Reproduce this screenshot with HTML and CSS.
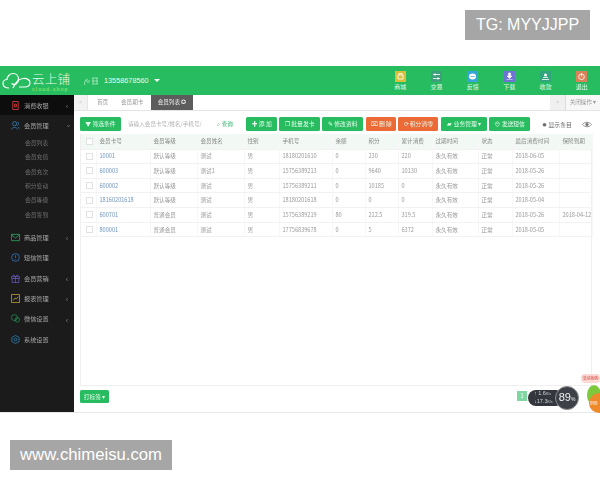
FILE: index.html
```html
<!DOCTYPE html>
<html lang="zh">
<head>
<meta charset="utf-8">
<title>云上铺</title>
<link rel="stylesheet" href="styles.css">
</head>
<body>
<div class="wm wm-top">TG: MYYJJPP</div>
<div class="app">
  <header class="head">
    <div class="logo">
      <svg class="cloud" width="30" height="18" viewBox="0 0 30 18" fill="none" stroke="#fff" stroke-width="1.200"><path d="M7 16C3 16 1 14 1 11.500C1 9 3 7.500 5 7.500C5.500 3.500 8.500 1.500 11 1.500C14.500 1.500 16.500 4 16.500 7C16.500 11 13 14 9.500 11.500"/><path d="M11 16C13 11 17 7 21 6.500C25 6 28 8 28 10.500C28 13 26 15 22.500 15L17 15"/></svg>
      <div class="logo-text"><span class="logo-cn">云上铺</span><span class="logo-en">cloud.shop</span></div>
    </div>
    <svg class="sig" width="18" height="12" viewBox="0 0 18 12" fill="none" stroke="#c4f0d3" stroke-width=".7"><path d="M3 10C1 7 6 2 5 5C4 8 8 9 7 5M10 3h6M10 6h6M10 9h6M11 3v6M15 3v6"/></svg>
    <span class="phone">13558678560</span><span class="caret"></span>
    <nav class="tools">
      <div class="tool"><svg class="ti ti-a" viewBox="0 0 11 11"><path d="M3 4h5v4H3zM4 4V2.500h3V4" fill="none" stroke="#fff" stroke-width=".8"/></svg><span>商城</span></div>
      <div class="tool"><svg class="ti ti-b" viewBox="0 0 11 11"><path d="M2 3.500h7M2 7.500h7" stroke="#fff" stroke-width=".8"/><circle cx="4" cy="3.500" r="1" fill="#fff"/><circle cx="7" cy="7.500" r="1" fill="#fff"/></svg><span>交易</span></div>
      <div class="tool"><svg class="ti ti-c" viewBox="0 0 11 11"><ellipse cx="5.500" cy="5.500" rx="3.500" ry="3" fill="#fff"/><path d="M3.500 5.500h4" stroke="#36a6d8" stroke-width=".7"/></svg><span>反馈</span></div>
      <div class="tool"><svg class="ti ti-d" viewBox="0 0 11 11"><path d="M4.500 2h2v3H8L5.500 7.500 3 5h1.500zM2.500 8.500h6" fill="#fff" stroke="#fff" stroke-width=".5"/></svg><span>下载</span></div>
      <div class="tool"><svg class="ti ti-e" viewBox="0 0 11 11"><circle cx="5.500" cy="4" r="1.500" fill="#fff"/><path d="M2 8.500h7M3 6.500h5" stroke="#fff" stroke-width=".8"/></svg><span>收款</span></div>
      <div class="tool"><svg class="ti ti-f" viewBox="0 0 11 11"><circle cx="5.500" cy="5.800" r="2.800" fill="none" stroke="#fff" stroke-width=".8"/><path d="M5.500 2v3.500" stroke="#fff" stroke-width=".8"/></svg><span>退出</span></div>
    </nav>
  </header>
  <div class="body">
    <aside class="side">
      <div class="mi mi-on"><svg class="si" viewBox="0 0 10 10" fill="none" stroke="#d33c3c"><path d="M2 .5h6v9H2zM4 3.500h2v3H4z"/></svg><b>消费收银</b><em>‹</em></div>
      <div class="mi"><svg class="si" viewBox="0 0 10 10" fill="none" stroke="#3f8fd0" stroke-width=".8"><circle cx="4" cy="3" r="2.300"/><path d="M.5 9.500C1 6.500 7 6.500 7.500 9.500M7 1c2 .5 2 3 0 4M8 6.500l1.500 2"/></svg><b>会员管理</b><em class="down">‹</em></div>
      <div class="subs">
        <div>会员列表</div><div>会员充值</div><div>会员充次</div><div>积分变动</div><div>会员等级</div><div>会员签到</div>
      </div>
      <div class="mi"><svg class="si" viewBox="0 0 10 10" fill="none" stroke="#2fb56a" stroke-width=".8"><path d="M.5 1.500h9v7h-9zM.5 2l4.500 3.500L9.500 2"/></svg><b>商品管理</b><em>‹</em></div>
      <div class="mi"><svg class="si" viewBox="0 0 10 10" fill="none" stroke="#3276c8" stroke-width=".9"><circle cx="5" cy="5" r="4.300"/><path d="M5 2.500v3M5 6.800v.8"/></svg><b>短信管理</b></div>
      <div class="mi"><svg class="si" viewBox="0 0 10 10" fill="none" stroke="#6a5fc8" stroke-width=".8"><path d="M.5 3h9v2h-9zM1.300 5v4.500h7.400V5M5 3v6.500M5 3C3 0 1 1 3 3M5 3c2-3 4-2 2 0"/></svg><b>会员营销</b><em>‹</em></div>
      <div class="mi"><svg class="si" viewBox="0 0 10 10" fill="none" stroke="#c8a03c" stroke-width=".9"><path d="M.5.500h9v9h-9zM2.500 7l2-2.500 1.500 1L8 3"/></svg><b>报表管理</b><em>‹</em></div>
      <div class="mi"><svg class="si" viewBox="0 0 10 10" fill="none" stroke="#1f9a55" stroke-width=".8"><circle cx="3.800" cy="4" r="3.300"/><circle cx="7" cy="6.500" r="2.500"/></svg><b>微信设置</b><em>‹</em></div>
      <div class="mi"><svg class="si" viewBox="0 0 10 10" fill="none" stroke="#2f8fc0" stroke-width=".8"><path d="M5 .5l4 2.250v4.500L5 9.500 1 7.250v-4.500z"/><circle cx="5" cy="5" r="1.500"/></svg><b>系统设置</b></div>
    </aside>
    <main class="main">
      <div class="tabs">
        <span class="tab-nav">«</span>
        <span class="tab tab-home">首页</span>
        <span class="tab tab-card">会员期卡</span>
        <span class="tab tab-on">会员列表 ✪</span>
        <span class="tab-right"><span class="tab-nav2">»</span><span class="tab-close">关闭操作 ▾</span></span>
      </div>
      <div class="work">
        <div class="bar">
          <span class="btn w-filter">▼ 筛选条件</span>
          <span class="search">请输入会员卡号/姓名/手机号/</span>
          <span class="query">⌕ 查询</span>
          <span class="btn w-add">✚ 添 加</span>
          <span class="btn w-batch">❐ 批量发卡</span>
          <span class="btn w-edit">✎ 修改资料</span>
          <span class="btn red w-del">⌧ 删 除</span>
          <span class="btn red w-clear">⟳ 积分清零</span>
          <span class="btn w-biz">▰ 业务管理 ▾</span>
          <span class="btn w-sms">⊖ 发送短信</span>
          <span class="show">✹ 显示条目</span>
          <svg class="eye" width="10" height="7" viewBox="0 0 10 7" fill="none" stroke="#777" stroke-width=".8"><path d="M.5 3.500C3 .5 7 .5 9.500 3.500 7 6.500 3 6.500.5 3.500z"/><circle cx="5" cy="3.500" r="1.300" fill="#777"/></svg>
        </div>
        <div class="grid">
          <table>
            <thead>
              <tr><th class="c1"><i class="cb"></i></th><th class="c2">会员卡号</th><th class="c3">会员等级</th><th class="c4">会员姓名</th><th class="c5">性别</th><th class="c6">手机号</th><th class="c7">余额</th><th class="c8">积分</th><th class="c9">累计消费</th><th class="c10">过期时间</th><th class="c11">状态</th><th class="c12">最后消费时间</th><th class="c13">保险到期</th></tr>
            </thead>
            <tbody>
              <tr><td><i class="cb"></i></td><td class="lk">10001</td><td>默认等级</td><td>测试</td><td>男</td><td>18180201610</td><td>0</td><td>230</td><td>220</td><td>永久有效</td><td>正常</td><td>2018-06-05</td><td></td></tr>
              <tr><td><i class="cb"></i></td><td class="lk">600003</td><td>默认等级</td><td>测试1</td><td>男</td><td>15756389213</td><td>0</td><td>9640</td><td>10130</td><td>永久有效</td><td>正常</td><td>2018-05-26</td><td></td></tr>
              <tr><td><i class="cb"></i></td><td class="lk">600002</td><td>默认等级</td><td>测试</td><td>男</td><td>15756389211</td><td>0</td><td>10185</td><td>0</td><td>永久有效</td><td>正常</td><td>2018-05-26</td><td></td></tr>
              <tr><td><i class="cb"></i></td><td class="lk">18160201618</td><td>默认等级</td><td>测试</td><td>男</td><td>18180201618</td><td>0</td><td>0</td><td>0</td><td>永久有效</td><td>正常</td><td>2018-05-04</td><td></td></tr>
              <tr><td><i class="cb"></i></td><td class="lk">600701</td><td>普通会员</td><td>测试</td><td>男</td><td>15756389219</td><td>80</td><td>212.5</td><td>319.5</td><td>永久有效</td><td>正常</td><td>2018-05-26</td><td>2018-04-12</td></tr>
              <tr><td><i class="cb"></i></td><td class="lk">800001</td><td>普通会员</td><td>测试</td><td>男</td><td>17756839678</td><td>0</td><td>5</td><td>6372</td><td>永久有效</td><td>正常</td><td>2018-05-05</td><td></td></tr>
            </tbody>
          </table>
        </div>
        <div class="foot"><span class="btn w-print">打标签 ▾</span><span class="page">1</span></div>
      </div>
    </main>
  </div>
</div>
<div class="widget">
  <div class="pill"><span>↑ 1.6<small>K/s</small></span><span>↓17.3<small>K/s</small></span></div>
  <div class="ring">89<small>%</small></div>
</div>
<div class="mascot">
  <div class="bubble">活动抢购</div>
  <div class="blob"></div>
  <div class="orange">999</div>
</div>
<div class="wm wm-bot">www.chimeisu.com</div>
</body>
</html>
```

FILE: styles.css
```css
* { box-sizing: border-box; }
html, body { margin: 0; padding: 0; height: 480px; overflow: hidden; background: #fff; }
body { position: relative; padding-top: 66px; font-family: "Noto Sans CJK SC", "Liberation Sans", sans-serif; font-size: 5.600px; color: #888; }
i, em { font-style: normal; }

.wm { position: absolute; background: #a6a6a6; color: #fff; font-family: "Liberation Sans", sans-serif; font-size: 16px; line-height: 30px; text-align: center; z-index: 5; }
.wm-top { left: 465px; top: 10px; width: 125px; }
.wm-bot { left: 10px; top: 440px; width: 162px; font-size: 16.700px; }

.app { height: 347px; display: flex; flex-direction: column; filter: blur(.4px); border-bottom: 1px solid #e8e8e8; }
.head { height: 29px; background: #27bc5f; display: flex; align-items: center; color: #fff; flex: none; }
.logo { display: flex; align-items: center; width: 82px; padding-left: 2px; }
.logo-text { display: flex; flex-direction: column; margin-top: 1px; }
.logo-cn { font-size: 12.500px; line-height: 15px; width: 40px; color: #e6faed; font-weight: 300; letter-spacing: .3px; white-space: nowrap; }
.logo-en { font-size: 5px; line-height: 6px; letter-spacing: 1px; color: #8fdc6a; font-family: "Liberation Sans", sans-serif; font-weight: bold; }
.sig { margin-right: 4px; }
.phone { font-family: "Liberation Sans", sans-serif; font-size: 7.300px; color: #e9fbef; }
.caret { margin-left: 5px; border-left: 3px solid transparent; border-right: 3px solid transparent; border-top: 3px solid #fff; }
.tools { margin-left: auto; display: flex; width: 218px; }
.tool { width: 36.400px; display: flex; flex-direction: column; align-items: center; font-size: 6px; line-height: 8px; gap: 1px; color: #e8fbef; padding-top: 1px; }
.ti { width: 11px; height: 11px; display: block; }
.ti-a { background: #d8c03c; }
.ti-b { background: #3f9f7a; }
.ti-c { background: #36a6d8; }
.ti-d { background: #6f74d4; }
.ti-e { background: #33a57c; }
.ti-f { background: #d9835a; }

.body { flex: 1; display: flex; min-height: 0; }
.side { width: 74px; background: #1b1b1b; flex: none; color: #a8a8a8; }
.mi { height: 20.400px; display: flex; align-items: center; padding-left: 11px; padding-right: 6px; gap: 4px; font-size: 6.200px; }
.mi b { font-weight: normal; flex: 1; }
.mi em { font-size: 7px; color: #999; }
.mi em.down { transform: rotate(-90deg); }
.mi-on { background: #0d0d0d; }
.si { width: 9px; height: 9px; flex: none; }
.subs { padding-bottom: 5px; color: #707070; font-size: 5.800px; }
.subs div { height: 14.400px; line-height: 14.400px; padding-left: 25px; }

.main { flex: 1; display: flex; flex-direction: column; min-width: 0; }
.tabs { height: 16px; display: flex; align-items: stretch; border-bottom: 1px solid #e4e4e4; line-height: 15px; flex: none; color: #999; }
.tab-nav { width: 14px; text-align: center; background: #f2f2f2; color: #bbb; border-right: 1px solid #e6e6e6; }
.tab { display: block; }
.tab-home { margin-left: 9px; width: 24px; }
.tab-card { width: 30px; }
.tab-on { background: #5c5c5c; color: #eee; width: 42px; text-align: center; }
.tab-right { margin-left: auto; display: flex; }
.tab-nav2 { width: 16px; text-align: center; background: #f0f0f0; color: #bbb; border-right: 1px solid #ddd; }
.tab-close { width: 34px; text-align: center; background: #f7f7f7; }

.work { flex: 1; display: flex; flex-direction: column; padding: 6px 8px 0 6px; min-height: 0; }
.bar { height: 14px; display: flex; align-items: center; flex: none; white-space: nowrap; }
.btn { height: 14px; line-height: 14px; background: #27bc5f; color: #e8fbef; border-radius: 1.500px; text-align: center; font-size: 5.800px; display: block; flex: none; }
.btn.red { background: #ec6a35; }
.w-filter { width: 41px; }
.search { width: 90px; margin-left: 7px; color: #b0b0b0; overflow: hidden; font-size: 5.600px; }
.query { width: 29px; color: #2fb56a; }
.w-add { width: 31px; }
.w-batch { width: 41px; margin-left: 2px; }
.w-edit { width: 41px; margin-left: 2px; }
.w-del { width: 30px; margin-left: 3px; }
.w-clear { width: 40px; margin-left: 2px; }
.w-biz { width: 46px; margin-left: 3px; }
.w-sms { width: 41px; margin-left: 2px; }
.show { margin-left: 12px; width: 40px; color: #666; font-size: 5.800px; }
.eye { flex: none; }

.grid { flex: 1; margin-top: 3px; border: 1px solid #f0f0f0; border-top: 0; min-height: 0; }
table { width: 511px; border-collapse: collapse; table-layout: fixed; }
th, td { font-weight: normal; text-align: left; padding: 0 0 0 3px; white-space: nowrap; overflow: hidden; border-right: 1px solid #f7f7f7; border-bottom: 1px solid #f2f2f2; }
th { height: 15px; background: #f2f9f4; color: #888; }
td { height: 14.670px; color: #999; }
.lk { color: #6f94c2; }
.cb { display: block; width: 7px; height: 7px; border: 1px solid #e2e2e2; background: #fff; margin-left: 2px; }
.c1 { width: 15px; }
.c2 { width: 54px; }
.c3 { width: 47px; }
.c4 { width: 47px; }
.c5 { width: 35px; }
.c6 { width: 53px; }
.c7 { width: 33px; }
.c8 { width: 33px; }
.c9 { width: 34px; }
.c10 { width: 46px; }
.c11 { width: 34px; }
.c12 { width: 47px; }
.c13 { width: 33px; }

.foot { height: 26px; flex: none; padding-top: 4px; display: flex; align-items: flex-start; }
.w-print { width: 29px; height: 13px; line-height: 13px; }
.page { margin-left: auto; margin-right: 65px; margin-top: 1px; width: 10px; height: 10px; line-height: 10px; background: #7fd6a0; color: #fff; text-align: center; }

.widget { position: absolute; left: 528px; top: 389px; width: 50px; height: 18px; z-index: 3; }
.pill { width: 36px; height: 16px; margin-top: 1px; border-radius: 8px; background: #33373d; color: #cfd3d6; font-size: 5.500px; font-family: "Liberation Sans", sans-serif; display: flex; flex-direction: column; justify-content: center; padding-left: 6px; line-height: 7px; white-space: nowrap; overflow: hidden; }
.pill small { font-size: 3.500px; }
.ring { position: absolute; left: 27px; top: -3px; width: 24px; height: 24px; border-radius: 50%; background: #3d4147; border: 1.500px solid #8b8f92; color: #f1f1f1; font-family: "Liberation Sans", sans-serif; font-size: 11px; line-height: 21px; text-align: center; }
.ring small { font-size: 5px; }

.mascot { position: absolute; left: 578px; top: 372px; width: 22px; height: 44px; z-index: 4; overflow: hidden; }
.bubble { position: absolute; left: 3px; top: 2px; width: 19px; height: 9px; background: #fbd9d4; border-radius: 4px; color: #d8342c; font-size: 4px; line-height: 9px; text-align: center; white-space: nowrap; overflow: hidden; }
.blob { position: absolute; left: 9px; top: 13px; width: 14px; height: 20px; background: #7dc83c; border-radius: 50%; }
.orange { position: absolute; left: 11px; top: 21px; width: 20px; height: 20px; background: #ef8a2c; border-radius: 50%; color: #fff; font-size: 4.500px; line-height: 20px; padding-left: 1px; }
```
